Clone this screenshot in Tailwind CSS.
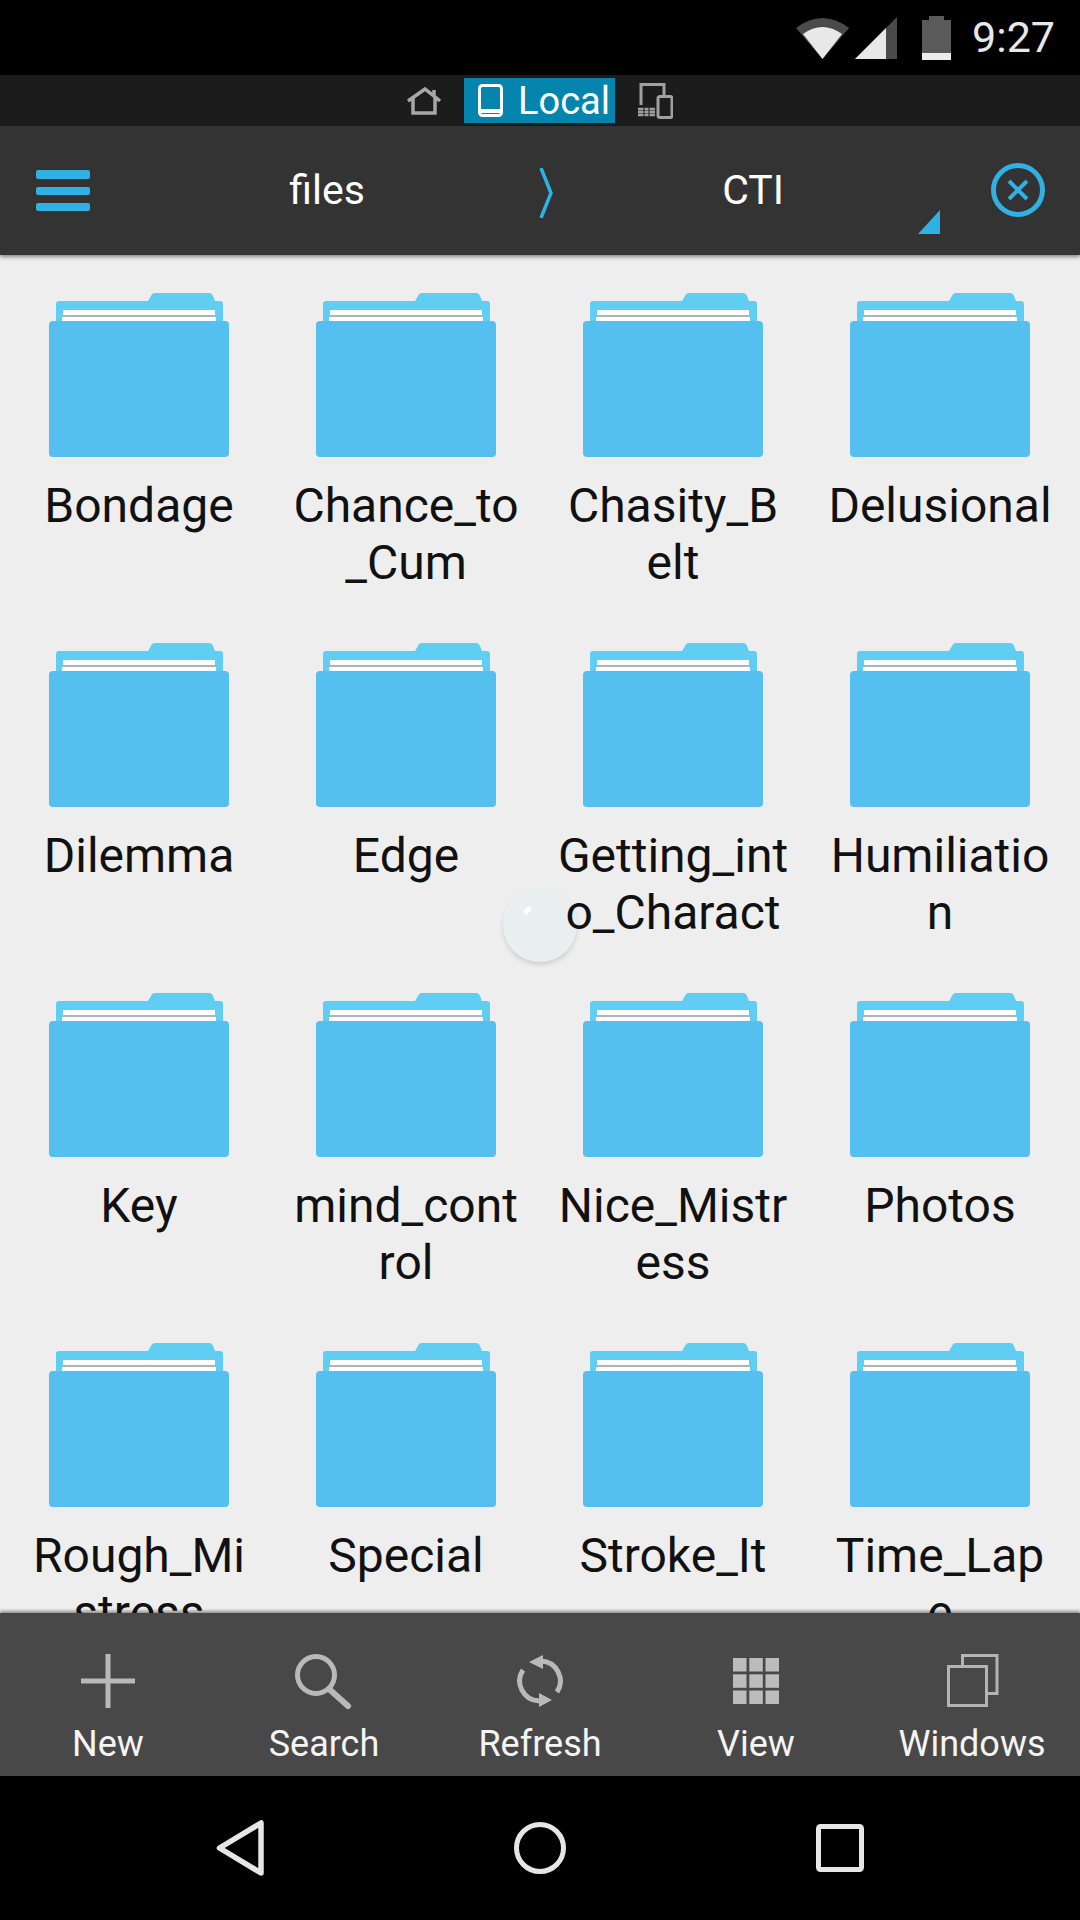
<!DOCTYPE html>
<html lang="en">
<head>
  <meta charset="UTF-8" />
  <meta name="viewport" content="width=device-width, initial-scale=1.0"/>
  <title>Files</title>
  <script src="https://cdn.jsdelivr.net/npm/@tailwindcss/browser@4"></script>
</head>
<body class="bg-black font-['Roboto',sans-serif]">
  <!-- shared folder icon -->
  <svg class="hidden">
    <symbol id="folder" viewBox="0 0 180 164">
      <path d="M7 11a3 3 0 0 1 3-3h89l3-5q1-3 4-3h54q3 0 4 3l2 5h5a3 3 0 0 1 3 3v20H7z" fill="#60cdf3"/>
      <rect x="14" y="17" width="152" height="5" fill="#fdfdfd"/>
      <rect x="14" y="22" width="152" height="2" fill="#a9b5b6"/>
      <rect x="13" y="24" width="154" height="5" fill="#fbfdfe"/>
      <rect x="0" y="28" width="180" height="136" rx="4" fill="#55bff0"/>
    </symbol>
  </svg>

  <div class="relative w-[1080px] h-[1920px] overflow-hidden flex flex-col">

    <!-- status bar -->
    <div class="h-[75px] bg-black flex items-center justify-end pr-[25px] text-[#e8e8e8]">
      <svg class="w-[53px] h-[43px] mt-[-1px]" viewBox="0 0 53 43">
        <path d="M26.5 43L0 12Q26.5 -8 53 12z" fill="#4a4a4a"/>
        <path d="M26.5 43L7 18Q26.5 4 46 18z" fill="#e8e8e8"/>
      </svg>
      <svg class="w-[42px] h-[42px] ml-[6px]" viewBox="0 0 42 42">
        <path d="M0 42L42 0v42z" fill="#4a4a4a"/>
        <path d="M0 42L31 11v31z" fill="#e8e8e8"/>
      </svg>
      <svg class="w-[29px] h-[44px] ml-[25px]" viewBox="0 0 29 44">
        <path d="M7 0h15v4h7v33H0V4h7z" fill="#5a5a5a"/>
        <rect y="37" width="29" height="7" fill="#ececec"/>
      </svg>
      <span class="ml-[21px] text-[43px] leading-none">9:27</span>
    </div>

    <!-- storage switcher -->
    <div class="h-[51px] bg-[#1c1c1c] flex items-center justify-center">
      <svg class="w-[34px] h-[28px]" viewBox="0 0 34 28" fill="none" stroke="#a8a8a8" stroke-width="3.500">
        <path d="M1 14L18 2l15 12M6 11v15h22V11M27 3v7"/>
      </svg>
      <div class="ml-[23px] mr-[23px] w-[151px] h-[45px] bg-[#0585ae] flex items-center pl-[14px] text-white text-[38px]">
        <svg class="w-[25px] h-[33px] shrink-0" viewBox="0 0 25 33" fill="none" stroke="#fff" stroke-width="3">
          <rect x="1.500" y="1.500" width="22" height="30" rx="3"/>
          <path d="M2 27h21" stroke-width="4"/>
        </svg>
        <span class="ml-[15px] leading-none">Local</span>
      </div>
      <svg class="w-[35px] h-[36px]" viewBox="0 0 35 36" fill="none" stroke="#a0a0a0" stroke-width="3">
        <path d="M3 22V1.500h23V12"/>
        <rect x="20" y="13.500" width="14" height="21" rx="2"/>
        <path d="M0 26h17M0 29h17M0 32h17" stroke-width="2.500"/>
        <path d="M6 24v10M11 24v10" stroke="#1c1c1c" stroke-width="1"/>
      </svg>
    </div>

    <!-- path bar -->
    <div class="relative z-10 h-[129px] bg-[#333333] flex items-center text-white text-[41px] shadow-[0_2px_4px_rgba(0,0,0,0.45)]">
      <div class="w-[126px] pl-[36px] flex flex-col gap-[8px]">
        <div class="w-[54px] h-[9px] rounded-[2px] bg-[#2fb1e4]"></div>
        <div class="w-[54px] h-[8px] rounded-[2px] bg-[#2fb1e4]"></div>
        <div class="w-[54px] h-[8px] rounded-[2px] bg-[#2fb1e4]"></div>
      </div>
      <div class="w-[402px] text-center leading-none">files</div>
      <div class="w-[36px] flex justify-center">
        <svg class="w-[14px] h-[50px] mt-[4px]" viewBox="0 0 14 50" fill="none" stroke="#2fb1e4" stroke-width="3.500">
          <path d="M2 0L12 25 2 50"/>
        </svg>
      </div>
      <div class="relative w-[378px] text-center leading-none">CTI</div>
      <div class="flex-1 pl-[49px]">
        <svg class="w-[54px] h-[54px] mt-[-2px]" viewBox="0 0 54 54" fill="none" stroke="#2fb1e4">
          <circle cx="27" cy="27" r="24.500" stroke-width="5"/>
          <path d="M18 18l18 18M36 18L18 36" stroke-width="4"/>
        </svg>
      </div>
      <div class="absolute left-[918px] top-[84px] w-[22px] h-[24px] bg-[#2fb1e4] [clip-path:polygon(100%_0,100%_100%,0_100%)]"></div>
    </div>

    <!-- folder grid -->
    <div class="relative flex-1 min-h-0 overflow-hidden bg-[#eeeeee] pl-[5.5px] pr-[6.5px] pt-[38px] grid grid-cols-4 auto-rows-[350px] text-[48px] leading-[57px] text-[#111111] text-center">
      <!-- floating touch bubble, sits under the labels -->
      <div class="absolute left-[503px] top-[633px] w-[74px] h-[74px] rounded-full bg-[#e9eff1] shadow-[0_3px_5px_rgba(0,0,0,0.12)]">
        <div class="absolute left-[20px] top-[20px] w-[9px] h-[5px] -rotate-45 rounded-full bg-white"></div>
      </div>
      <div class="flex flex-col items-center"><svg class="w-[180px] h-[164px] mb-[20px] shrink-0"><use href="#folder"/></svg><div class="w-[230px] break-all">Bondage</div></div>
      <div class="flex flex-col items-center"><svg class="w-[180px] h-[164px] mb-[20px] shrink-0"><use href="#folder"/></svg><div class="w-[230px] break-all">Chance_to_Cum</div></div>
      <div class="flex flex-col items-center"><svg class="w-[180px] h-[164px] mb-[20px] shrink-0"><use href="#folder"/></svg><div class="w-[230px] break-all">Chasity_Belt</div></div>
      <div class="flex flex-col items-center"><svg class="w-[180px] h-[164px] mb-[20px] shrink-0"><use href="#folder"/></svg><div class="w-[230px] break-all">Delusional</div></div>
      <div class="flex flex-col items-center"><svg class="w-[180px] h-[164px] mb-[20px] shrink-0"><use href="#folder"/></svg><div class="w-[230px] break-all">Dilemma</div></div>
      <div class="flex flex-col items-center"><svg class="w-[180px] h-[164px] mb-[20px] shrink-0"><use href="#folder"/></svg><div class="w-[230px] break-all">Edge</div></div>
      <div class="relative flex flex-col items-center"><svg class="w-[180px] h-[164px] mb-[20px] shrink-0"><use href="#folder"/></svg><div class="w-[236px] break-all">Getting_into_Charact</div></div>
      <div class="flex flex-col items-center"><svg class="w-[180px] h-[164px] mb-[20px] shrink-0"><use href="#folder"/></svg><div class="w-[230px] break-all">Humiliation</div></div>
      <div class="flex flex-col items-center"><svg class="w-[180px] h-[164px] mb-[20px] shrink-0"><use href="#folder"/></svg><div class="w-[230px] break-all">Key</div></div>
      <div class="flex flex-col items-center"><svg class="w-[180px] h-[164px] mb-[20px] shrink-0"><use href="#folder"/></svg><div class="w-[230px] break-all">mind_control</div></div>
      <div class="flex flex-col items-center"><svg class="w-[180px] h-[164px] mb-[20px] shrink-0"><use href="#folder"/></svg><div class="w-[230px] break-all">Nice_Mistress</div></div>
      <div class="flex flex-col items-center"><svg class="w-[180px] h-[164px] mb-[20px] shrink-0"><use href="#folder"/></svg><div class="w-[230px] break-all">Photos</div></div>
      <div class="flex flex-col items-center"><svg class="w-[180px] h-[164px] mb-[20px] shrink-0"><use href="#folder"/></svg><div class="w-[230px] break-all">Rough_Mistress</div></div>
      <div class="flex flex-col items-center"><svg class="w-[180px] h-[164px] mb-[20px] shrink-0"><use href="#folder"/></svg><div class="w-[230px] break-all">Special</div></div>
      <div class="flex flex-col items-center"><svg class="w-[180px] h-[164px] mb-[20px] shrink-0"><use href="#folder"/></svg><div class="w-[230px] break-all">Stroke_It</div></div>
      <div class="flex flex-col items-center"><svg class="w-[180px] h-[164px] mb-[20px] shrink-0"><use href="#folder"/></svg><div class="w-[230px] break-all">Time_Lape</div></div>
    </div>

    <!-- bottom toolbar -->
    <div class="relative z-10 h-[163px] bg-[#484848] grid grid-cols-5 pt-[38px] text-[36px] leading-[40px] text-[#f4f4f4] text-center shadow-[0_-2px_3px_rgba(0,0,0,0.4)]">
      <div class="flex flex-col items-center">
        <svg class="w-[60px] h-[60px]" viewBox="0 0 60 60" stroke="#b9b9b9" stroke-width="5" fill="none"><path d="M3 30h54M30 3v54"/></svg>
        <span class="mt-[13px]">New</span>
      </div>
      <div class="flex flex-col items-center">
        <svg class="w-[60px] h-[60px]" viewBox="0 0 60 60" stroke="#b9b9b9" fill="none"><circle cx="22" cy="24" r="18.500" stroke-width="5"/><path d="M35 38l19 17" stroke-width="6" stroke-linecap="round"/></svg>
        <span class="mt-[13px]">Search</span>
      </div>
      <div class="flex flex-col items-center">
        <svg class="w-[60px] h-[60px]" viewBox="0 0 60 60" fill="none" stroke="#b9b9b9" stroke-width="5">
          <path d="M31 10A20 20 0 0 1 47 41M29 50A20 20 0 0 1 13 19"/>
          <path d="M33 4v14l-14-7zM29 42v14l13-7z" fill="#b9b9b9" stroke="none"/>
        </svg>
        <span class="mt-[13px]">Refresh</span>
      </div>
      <div class="flex flex-col items-center">
        <svg class="w-[60px] h-[60px]" viewBox="0 0 60 60" fill="#bcbcbc">
          <rect x="7" y="7" width="13.500" height="13.500"/><rect x="23.300" y="7" width="13.500" height="13.500"/><rect x="39.500" y="7" width="13.500" height="13.500"/>
          <rect x="7" y="23.300" width="13.500" height="13.500"/><rect x="23.300" y="23.300" width="13.500" height="13.500"/><rect x="39.500" y="23.300" width="13.500" height="13.500"/>
          <rect x="7" y="39.500" width="13.500" height="13.500"/><rect x="23.300" y="39.500" width="13.500" height="13.500"/><rect x="39.500" y="39.500" width="13.500" height="13.500"/>
        </svg>
        <span class="mt-[13px]">View</span>
      </div>
      <div class="flex flex-col items-center">
        <svg class="w-[60px] h-[60px]" viewBox="0 0 60 60" fill="none" stroke="#b4b4b4" stroke-width="3">
          <rect x="6.500" y="15.500" width="38" height="39"/>
          <path d="M20.500 15V4.500h34.500V42.500H45"/>
        </svg>
        <span class="mt-[13px]">Windows</span>
      </div>
    </div>

    <!-- android nav bar -->
    <div class="h-[144px] bg-black flex items-center justify-center gap-[240px]">
      <svg class="w-[60px] h-[60px]" viewBox="0 0 60 60" fill="none" stroke="#e6e6e6" stroke-width="5.500" stroke-linejoin="round"><path d="M51 5v50L9.500 30z"/></svg>
      <svg class="w-[60px] h-[60px]" viewBox="0 0 60 60" fill="none" stroke="#e6e6e6" stroke-width="5"><circle cx="30" cy="30" r="23.500"/></svg>
      <svg class="w-[60px] h-[60px]" viewBox="0 0 60 60" fill="none" stroke="#e6e6e6" stroke-width="5"><rect x="8.500" y="8.500" width="43" height="43" rx="2"/></svg>
    </div>
  </div>
</body>
</html>
